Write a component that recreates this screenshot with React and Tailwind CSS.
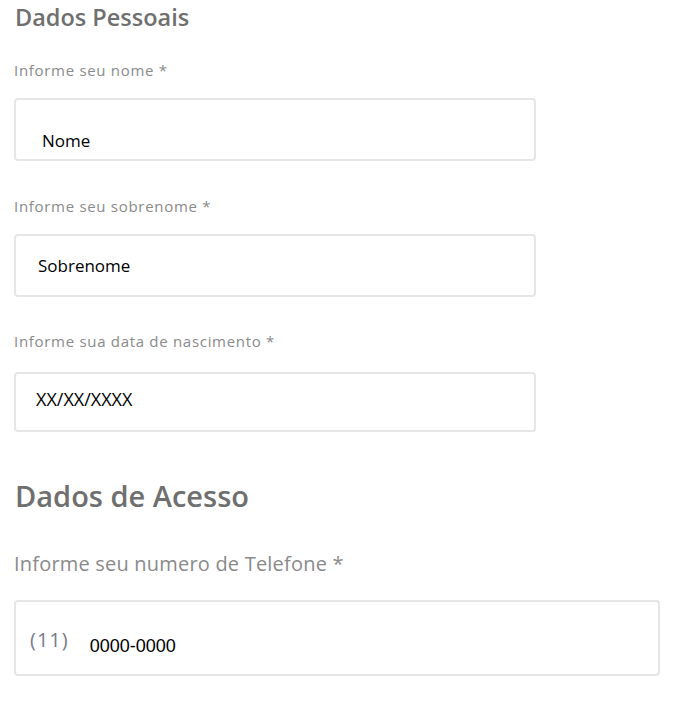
export default function App() {
  const label = "text-[15px] tracking-[0.7px] text-[#8a8a8a] leading-[15px]";
  const box = "border-2 border-[#e6e6e6] rounded-[4px] bg-white flex items-start";
  return (
    <div className="w-[684px] h-[712px] bg-white font-['Open_Sans',sans-serif] px-[14px] pt-[4px]">
      <h2 className="text-[23.5px] font-semibold text-[#6f6f6f] leading-[26px] ml-[1px]">Dados Pessoais</h2>
      <div className={label + " mt-[33px]"}>Informe seu nome *</div>
      <div className={box + " mt-[20px] w-[522px] h-[63px] pl-[26px] pt-[32px]"}>
        <span className="text-[17px] text-black leading-none">Nome</span>
      </div>
      <div className={label + " mt-[38px]"}>Informe seu sobrenome *</div>
      <div className={box + " mt-[20px] w-[522px] h-[63px] pl-[22px] pt-[21px]"}>
        <span className="text-[17px] text-black leading-none">Sobrenome</span>
      </div>
      <div className={label + " mt-[37px]"}>Informe sua data de nascimento *</div>
      <div className={box + " mt-[23px] w-[522px] h-[60px] pl-[20px] pt-[16px]"}>
        <span className="text-[18px] text-black leading-none">XX/XX/XXXX</span>
      </div>
      <h2 className="text-[29px] font-semibold text-[#6f6f6f] leading-[34px] mt-[47px] ml-[1px]">Dados de Acesso</h2>
      <div className="text-[20px] tracking-[0.2px] text-[#8a8a8a] leading-[20px] mt-[41px]">Informe seu numero de Telefone *</div>
      <div className={box + " mt-[26px] w-[646px] h-[76px] pl-[14px]"}>
        <span className="mt-[28px] text-[20px] tracking-[1px] text-[#7a7a8c] leading-none">(11)</span>
        <span className="mt-[34.5px] ml-[21px] text-[18px] text-black leading-none font-['Liberation_Sans',sans-serif]">0000-0000</span>
      </div>
    </div>
  );
}
